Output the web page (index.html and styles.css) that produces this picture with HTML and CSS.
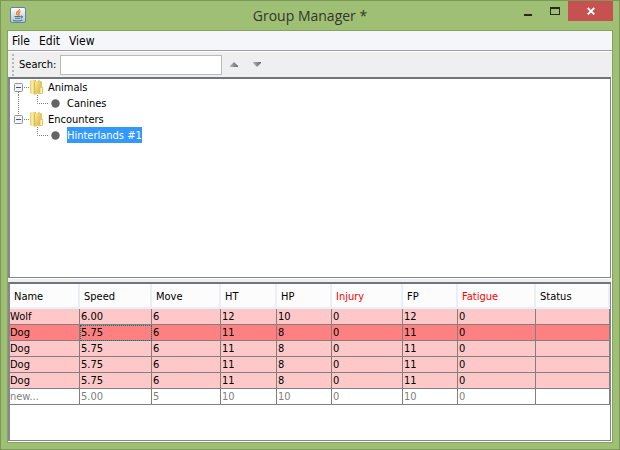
FILE: index.html
```html
<!DOCTYPE html>
<html lang="en">
<head>
<meta charset="utf-8">
<title>Group Manager</title>
<link rel="stylesheet" href="styles.css">
</head>
<body>
<svg width="0" height="0" class="defs" aria-hidden="true">
  <defs>
    <linearGradient id="gold" x1="0" x2="1"><stop offset="0" stop-color="#e5c85c"/><stop offset=".35" stop-color="#fbf0b4"/><stop offset="1" stop-color="#e0c04c"/></linearGradient>
    <linearGradient id="flap" x1="0" x2="1" y1="0" y2="1"><stop offset="0" stop-color="#fbf0b0"/><stop offset="1" stop-color="#d8b53a"/></linearGradient>
    <linearGradient id="steel" x1="0" x2="0" y1="0" y2="1"><stop offset="0" stop-color="#fdfdfd"/><stop offset="1" stop-color="#b4c6d4"/></linearGradient>
    <linearGradient id="arrow" x1="0" x2="1"><stop offset="0" stop-color="#b5b5b5"/><stop offset="1" stop-color="#666"/></linearGradient>
    <symbol id="expander" viewBox="0 0 9 9"><rect x=".5" y=".5" width="8" height="8" rx="1" fill="#f4f4f4" stroke="#919191"/><path d="M2 4.500H7" stroke="#3c50a0"/></symbol>
    <symbol id="folder" viewBox="0 0 14 16">
      <path d="M7 2h4l1 1v4l1 1v6l-1 1H7z" fill="#e3c75a"/>
      <path d="M10.500 9h1.500v5h-1.500z" fill="#fff7d2"/>
      <path d="M0 2l1-1h5v14H1l-1-1z" fill="url(#gold)"/>
      <path d="M4.500 3L10 .5v12.500L5 16z" fill="url(#flap)"/>
      <path d="M4.500 3v12.500" stroke="#cfae40" stroke-width=".7"/>
    </symbol>
  </defs>
</svg>
<div class="window">
  <header class="titlebar">
    <svg class="app-icon" width="16" height="16" viewBox="0 0 16 16" aria-hidden="true">
      <rect x=".5" y=".5" width="15" height="15" rx="1.500" fill="url(#steel)" stroke="#63839f"/>
      <path d="M9.500 2C10 4 6 4.500 6.500 6.500c.2 1 1.500 1 1.200 2M10.500 4.500C8.500 5.500 8.500 6 9 7c.4.800.1 1-.5 1.500" fill="none" stroke="#e87722" stroke-width="1.300"/>
      <path d="M4.500 9.500h6M5 11.200h5M3 13.300c2 1 7 1 9.500-.3M10.700 9.300c2-.7 2.500 1 0 2" fill="none" stroke="#45718f" stroke-width="1.100"/>
    </svg>
    <h1 class="title">Group Manager *</h1>
    <div class="controls">
      <button class="control" type="button" aria-label="Minimize"><svg width="10" height="10" shape-rendering="crispEdges"><path d="M1 8h8v2H1z" fill="#26291f"/></svg></button>
      <button class="control" type="button" aria-label="Maximize"><svg width="10" height="10" shape-rendering="crispEdges"><path d="M0 1h10v8H0zM1 3v5h8V3z" fill="#26291f" fill-rule="evenodd"/></svg></button>
      <button class="control close" type="button" aria-label="Close"><svg width="8" height="8"><path d="M.7 1l6.600 6.500M7.300 1L.7 7.500" stroke="#fff" stroke-width="1.800"/></svg></button>
    </div>
  </header>
  <main class="client">
    <nav class="menubar">
      <button type="button">File</button>
      <button type="button">Edit</button>
      <button type="button">View</button>
    </nav>
    <div class="toolbar">
      <span class="grip"></span>
      <label for="search">Search:</label>
      <input id="search" class="search" type="text">
      <button class="step" type="button" aria-label="Previous match"><svg width="8" height="5"><path d="M4 0l4 4v1H0V4z" fill="url(#arrow)"/></svg></button>
      <button class="step" type="button" aria-label="Next match"><svg width="8" height="5"><path d="M0 0h8v1L4 5 0 1z" fill="url(#arrow)"/></svg></button>
    </div>
    <section class="pane tree-pane">
      <ul class="tree">
        <li>
          <div class="node">
            <svg width="38" height="16"><path class="dots" d="M8.500 13v3M14 8.500h6"/><use href="#expander" x="4" y="4" width="9" height="9"/><use href="#folder" x="20" y="0" width="14" height="16"/></svg>
            <span class="label">Animals</span>
          </div>
          <ul>
            <li class="node">
              <svg width="57" height="16"><path class="dots" d="M8.500 0v16M27.500 0v8.500H38"/><circle cx="45.500" cy="8.500" r="4.200" fill="#646464"/></svg>
              <span class="label">Canines</span>
            </li>
          </ul>
        </li>
        <li>
          <div class="node">
            <svg width="38" height="16"><path class="dots" d="M8.500 0v4M14 8.500h6"/><use href="#expander" x="4" y="4" width="9" height="9"/><use href="#folder" x="20" y="0" width="14" height="16"/></svg>
            <span class="label">Encounters</span>
          </div>
          <ul>
            <li class="node">
              <svg width="57" height="16"><path class="dots" d="M27.500 0v8.500H38"/><circle cx="45.500" cy="8.500" r="4.200" fill="#646464"/></svg>
              <span class="label selected">Hinterlands #1</span>
            </li>
          </ul>
        </li>
      </ul>
    </section>
    <section class="pane table-pane">
      <table class="group">
        <colgroup><col class="name"><col class="speed"><col class="move"><col class="ht"><col class="hp"><col class="injury"><col class="fp"><col class="fatigue"><col></colgroup>
        <thead>
          <tr><th>Name</th><th>Speed</th><th>Move</th><th>HT</th><th>HP</th><th class="alert">Injury</th><th>FP</th><th class="alert">Fatigue</th><th>Status</th></tr>
        </thead>
        <tbody>
          <tr><td>Wolf</td><td>6.00</td><td>6</td><td>12</td><td>10</td><td>0</td><td>12</td><td>0</td><td></td></tr>
          <tr class="current"><td>Dog</td><td class="focus">5.75</td><td>6</td><td>11</td><td>8</td><td>0</td><td>11</td><td>0</td><td></td></tr>
          <tr><td>Dog</td><td>5.75</td><td>6</td><td>11</td><td>8</td><td>0</td><td>11</td><td>0</td><td></td></tr>
          <tr><td>Dog</td><td>5.75</td><td>6</td><td>11</td><td>8</td><td>0</td><td>11</td><td>0</td><td></td></tr>
          <tr><td>Dog</td><td>5.75</td><td>6</td><td>11</td><td>8</td><td>0</td><td>11</td><td>0</td><td></td></tr>
          <tr class="new"><td>new...</td><td>5.00</td><td>5</td><td>10</td><td>10</td><td>0</td><td>10</td><td>0</td><td></td></tr>
        </tbody>
      </table>
    </section>
  </main>
</div>
</body>
</html>
```
FILE: styles.css
```css
* {
  box-sizing: border-box;
}

body {
  margin: 0;
  font: 11px/16px "DejaVu Sans Condensed", "DejaVu Sans", sans-serif;
  color: #000;
}

button {
  margin: 0;
  padding: 0;
  border: 0;
  background: none;
  font: inherit;
  color: inherit;
}

svg {
  display: block;
  flex: none;
}

.defs {
  position: absolute;
}

.window {
  display: flex;
  flex-direction: column;
  height: 100vh;
  padding: 0 6px 6px;
  border: 1px solid #7b9858;
  background: #9fbf75;
}

.titlebar {
  display: grid;
  grid-template-columns: 1fr auto 1fr;
  flex: none;
  height: 29px;
}

.app-icon {
  margin: 6px 0 0 3px;
}

.title {
  margin: 0;
  font: 14px/29px "Open Sans", sans-serif;
  color: #30372a;
}

.controls {
  display: flex;
  justify-content: flex-end;
  height: 20px;
}

.control {
  display: grid;
  place-items: center;
  width: 27px;
}

.close {
  width: 45px;
  background: #c75050;
}

.client {
  display: flex;
  flex-direction: column;
  flex: 1;
  min-height: 0;
  padding-bottom: 1px;
  border: 1px solid #84a35c;
  background: #fff;
}

.menubar {
  display: flex;
  flex: none;
  gap: 9px;
  height: 20px;
  padding-left: 4px;
  border-bottom: 1px solid #a0a0a0;
  background: #f4f6f9;
  font-size: 12px;
  line-height: 20px;
}

.toolbar {
  display: flex;
  align-items: center;
  flex: none;
  height: 25px;
  margin-top: 1px;
  padding-left: 4px;
  background: #efefef;
}

.grip {
  width: 2px;
  height: 22px;
  margin-right: 5px;
  background: repeating-linear-gradient(#b8b8b8 0 2px, transparent 2px 4px);
}

.search {
  width: 162px;
  height: 20px;
  margin: 0 0 0 4px;
  padding: 0 3px;
  border: 1px solid #bababa;
  background: #fff;
  font: inherit;
}

.step {
  display: grid;
  place-items: center;
  width: 23px;
  height: 20px;
}

.pane {
  min-height: 0;
  margin-right: 1px;
  border: solid #828790;
  border-width: 2px 1px 1px 2px;
  border-top-color: #70747c;
  background: #fff;
  overflow: hidden;
}

.tree-pane {
  flex: 201;
}

.table-pane {
  flex: 159;
  margin-top: 4px;
  box-shadow: 0 -3px #efefef;
}

.tree,
.tree ul {
  margin: 0;
  padding: 0;
  list-style: none;
}

.node {
  display: flex;
  height: 16px;
}

.label {
  height: 16px;
  line-height: 17px;
}

.dots {
  fill: none;
  stroke: #808080;
  stroke-dasharray: 1 1;
}

.selected {
  background: #3399ff;
  color: #fff;
}

.group {
  width: 100%;
  table-layout: fixed;
  border-collapse: separate;
  border-spacing: 0;
}

.name { width: 70px; }
.speed { width: 72px; }
.move { width: 69px; }
.ht { width: 56px; }
.hp { width: 55px; }
.injury { width: 71px; }
.fp { width: 55px; }
.fatigue { width: 78px; }

th {
  height: 25px;
  padding: 4px 0 0 4px;
  border: solid #e8eff8;
  border-width: 0 2px 2px 0;
  background: #fcfcfc;
  font-weight: normal;
  text-align: left;
}

td {
  height: 16px;
  padding: 0 0 0 1px;
  border: solid #808080;
  border-width: 0 1px 1px 0;
  background: #ffc8c8;
  line-height: 15px;
}

tr > :first-child {
  padding-left: 0;
}

th:first-child {
  padding-left: 4px;
}

.alert {
  color: #f00;
}

.current td {
  background: #ff8080;
}

.current .focus {
  outline: 1px dotted #007f7f;
  outline-offset: -1px;
}

.new td {
  background: #fff;
  color: #808080;
}
```
